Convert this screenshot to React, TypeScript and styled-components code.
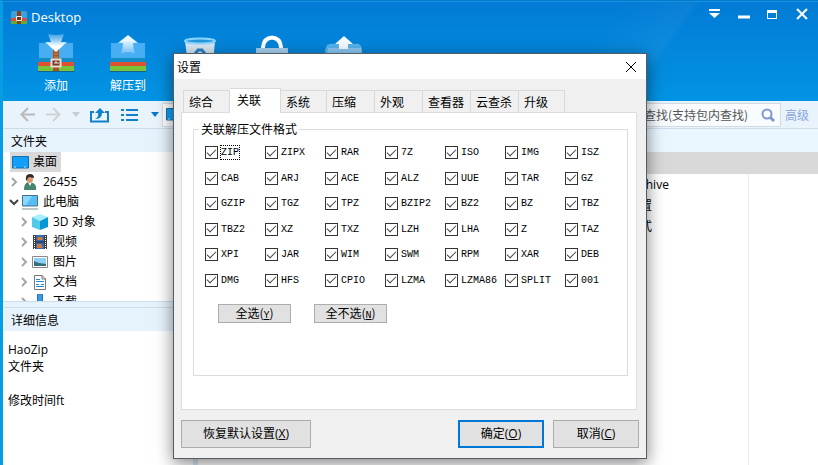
import React from "react";
import styled, { createGlobalStyle, css } from "styled-components";

const UI_FONT = `"Open Sans", "Noto Sans CJK SC", sans-serif`;
const CJK_FONT = `"Noto Sans CJK SC", sans-serif`;
const MONO_FONT = `"Liberation Mono", "Noto Sans CJK SC", monospace`;

const GlobalStyle = createGlobalStyle`
  *, *::before, *::after { box-sizing: border-box; }
  body { margin: 0; font: 12px/16px ${UI_FONT}; color: #000; overflow: hidden; }
  button, input { font: inherit; color: inherit; }
  button { padding: 0; margin: 0; border: 0; background: none; }
  svg { display: block; flex: none; }
`;

const Window = styled.div`
  position: relative;
  display: flex;
  flex-direction: column;
  height: 100vh;
  border-left: 3px solid #069de3;
  border-top: 1px solid #0878cb;
  background: #fff;
`;

const Banner = styled.header`
  flex: none;
  height: 100px;
  color: #fff;
  border-top: 1px solid #1192e2;
  background:
    linear-gradient(125deg, transparent 70%, rgba(255, 255, 255, 0.04) 78%, transparent 79%),
    linear-gradient(#027bd5, #0394e4);
`;

const TitleBar = styled.div`
  display: flex;
  align-items: center;
  justify-content: space-between;
  height: 30px;
  padding: 0 7px 0 8px;
`;

const AppTitle = styled.h1`
  display: flex;
  align-items: center;
  gap: 4px;
  margin: 0;
  font: 13px/18px ${UI_FONT};
`;

const WindowControls = styled.div`
  display: flex;
  gap: 11px;
  padding-bottom: 8px;
`;

const ActionBar = styled.div`
  display: flex;
  padding-left: 17px;
`;

const Action = styled.button`
  display: flex;
  flex-direction: column;
  align-items: center;
  justify-content: flex-start;
  width: 72px;
  font: 12px/20px ${CJK_FONT};
`;

const NavBar = styled.nav`
  flex: none;
  display: flex;
  align-items: center;
  height: 28px;
  padding-left: 12px;
  background: #e8f3fc;
  border-bottom: 1px solid #ccdcea;
`;

const NavButton = styled.button<{ $w: number }>`
  display: grid;
  place-items: center;
  width: ${(p) => p.$w}px;
  height: 24px;
`;

const AddressBox = styled.div`
  flex: 1;
  display: flex;
  align-items: center;
  height: 24px;
  margin-right: 4px;
  padding-left: 3px;
  border: 1px solid #d5dfe8;
  background: #fff;
`;

const SearchBox = styled.div`
  display: flex;
  align-items: center;
  width: 142px;
  height: 24px;
  border: 1px solid #d0dbe6;
  background: #f8fcff;
`;

const SearchInput = styled.input`
  flex: 1;
  min-width: 0;
  padding: 0 0 0 4px;
  border: 0;
  outline: 0;
  background: transparent;
  font: 12px/18px ${CJK_FONT};
  &::placeholder { color: #555; opacity: 1; }
`;

const AdvancedLink = styled.a`
  width: 37px;
  padding-left: 4px;
  color: #8ba4dc;
  font: 12px/18px ${CJK_FONT};
  text-decoration: none;
`;

const Workspace = styled.div`
  flex: 1;
  display: flex;
  min-height: 0;
`;

const Sidebar = styled.aside`
  flex: none;
  display: flex;
  flex-direction: column;
  width: 195px;
  border-right: 5px solid #dcebf7;
`;

const PaneTitle = styled.h2`
  flex: none;
  margin: 0;
  padding-left: 8px;
  height: 23px;
  font: 12px/23px ${CJK_FONT};
  background: #e6f2fc;
`;

const Tree = styled.ul`
  flex: none;
  height: 150px;
  margin: 0;
  padding: 0;
  overflow: hidden;
  list-style: none;
  border-bottom: 1px solid #c9deee;
`;

const TreeRow = styled.li<{ $level: number }>`
  display: flex;
  align-items: center;
  height: 20px;
  padding-left: ${(p) => 4 + p.$level * 10}px;
`;

const TreeItem = styled.span<{ $selected?: boolean }>`
  display: flex;
  align-items: center;
  gap: 4px;
  height: 20px;
  font: 12px/18px ${UI_FONT};
  ${(p) =>
    p.$selected &&
    css`
      margin-left: 3px;
      padding: 0 4px 0 2px;
      background: #d9d9d9;
    `}
`;

const Arrow = styled.span`
  display: grid;
  place-items: center;
  width: 14px;
`;

const Details = styled.section`
  flex: 1;
  margin-top: 5px;
  border-top: 1px solid #c9deee;
  box-shadow: 0 -5px 0 #e6f2fc;
`;

const DetailText = styled.p`
  margin: 0;
  padding: 10px 5px 0;
  font: 12px/17px ${UI_FONT};
`;

const FileList = styled.main`
  flex: 1;
  display: flex;
  flex-direction: column;
  min-width: 0;
  background: #fff;
`;

const ListHeader = styled.div`
  height: 23px;
  background: #ebf7ff;
`;

const ListBody = styled.div`
  flex: 1;
  display: flex;
`;

const NameColumn = styled.div`
  flex: none;
  width: 551px;
  border-right: 1px solid #e1f0fa;
`;

const SelectedRow = styled.div`
  height: 22px;
  background: #d9d9d9;
`;

const FileRow = styled.div`
  height: 21px;
  padding-left: 442px;
  font: 12px/21px ${UI_FONT};
`;

const Overlay = styled.div`
  position: absolute;
  inset: 0;
  display: flex;
  align-items: flex-start;
  justify-content: center;
  padding-top: 52px;
  padding-right: 1px;
`;

const Dialog = styled.section`
  width: 474px;
  border: 1px solid #535d64;
  background: #f0f0f0;
  box-shadow: 0 4px 16px rgba(0, 0, 0, 0.5);
`;

const DialogTitle = styled.header`
  display: flex;
  align-items: center;
  justify-content: space-between;
  height: 25px;
  padding: 0 9px 0 3px;
  font: 12px/22px ${CJK_FONT};
  background: #fff;
`;

const DialogBody = styled.div`
  padding: 9px 7px 10px;
`;

const Tabs = styled.div`
  display: flex;
  align-items: flex-end;
  padding-left: 2px;
`;

const Tab = styled.button<{ $w: number; $active?: boolean }>`
  width: ${(p) => p.$w}px;
  height: 22px;
  padding-left: 5px;
  text-align: left;
  font: 12px/20px ${CJK_FONT};
  border: 1px solid #d9d9d9;
  border-width: 1px 1px 0 0;
  &:first-child { border-left-width: 1px; }
  ${(p) =>
    p.$active &&
    css`
      height: 25px;
      margin-bottom: -1px;
      padding: 0 0 2px 7px;
      background: #fff;
    `}
`;

const TabPanel = styled.div`
  margin-right: 2px;
  padding: 7px 8px 33px 11px;
  border: 1px solid #dcdcdc;
  background: #fff;
`;

const Group = styled.fieldset`
  min-width: 0;
  margin: 0;
  padding: 2px 2px 52px 11px;
  border: 1px solid #dcdcdc;
`;

const GroupTitle = styled.legend`
  margin-left: -6px;
  padding: 0 2px;
  font: 12px/18px ${CJK_FONT};
`;

const FormatGrid = styled.div`
  display: grid;
  grid-template-columns: repeat(7, 60px);
  grid-template-rows: repeat(6, 1fr);
  height: 153px;
`;

const Format = styled.label`
  display: flex;
  align-items: center;
  gap: 2px;
  font: 10px/13px ${MONO_FONT};
`;

const Check = styled.input`
  appearance: none;
  flex: none;
  width: 13px;
  height: 13px;
  margin: 0;
  border: 1px solid #333;
  background: #fff;
  display: grid;
  place-items: center;
  &:checked::after {
    content: "";
    width: 9px;
    height: 5px;
    margin-bottom: 3px;
    border: solid #444;
    border-width: 0 0 1px 1px;
    transform: rotate(-45deg);
  }
`;

const FormatName = styled.span<{ $focused?: boolean }>`
  border: 1px ${(p) => (p.$focused ? "dotted #000" : "solid transparent")};
`;

const SelectButtons = styled.div`
  display: flex;
  gap: 23px;
  padding: 11px 0 0 13px;
`;

const SmallButton = styled.button`
  width: 73px;
  height: 19px;
  border: 1px solid #adadad;
  background: #e1e1e1;
  font: 12px/16px ${CJK_FONT};
  u { font: 10px/16px ${MONO_FONT}; }
`;

const Footer = styled.footer`
  display: flex;
  gap: 9px;
  padding-top: 10px;
`;

const PushButton = styled.button<{ $primary?: boolean }>`
  width: 86px;
  height: 28px;
  border: ${(p) => (p.$primary ? "2px solid #0078d7" : "1px solid #adadad")};
  background: #e1e1e1;
  font: 12px/16px ${UI_FONT};
`;

const ResetButton = styled(PushButton)`
  width: 130px;
  margin-right: auto;
`;

const formats = [
  "ZIP", "ZIPX", "RAR", "7Z", "ISO", "IMG", "ISZ",
  "CAB", "ARJ", "ACE", "ALZ", "UUE", "TAR", "GZ",
  "GZIP", "TGZ", "TPZ", "BZIP2", "BZ2", "BZ", "TBZ",
  "TBZ2", "XZ", "TXZ", "LZH", "LHA", "Z", "TAZ",
  "XPI", "JAR", "WIM", "SWM", "RPM", "XAR", "DEB",
  "DMG", "HFS", "CPIO", "LZMA", "LZMA86", "SPLIT", "001",
];

const tabs: [string, number][] = [
  ["综合", 47], ["关联", 51], ["系统", 46], ["压缩", 48],
  ["外观", 48], ["查看器", 48], ["云查杀", 48], ["升级", 46],
];

const Archive = () => (
  <>
    <path d="M2 11H36V26H2Z" fill="#48aef3" />
    <path d="M1 26H37V30H1Z" fill="#128dc6" />
    <path d="M1 30H37V34H1Z" fill="#df5130" />
    <path d="M1 34H37V39H1Z" fill="#77c43b" />
    <path d="M1 39H37V40H1Z" fill="#16638e" />
  </>
);

const Buckle = () => (
  <>
    <path d="M16 17H22V39H16Z" fill="#a65222" />
    <path d="M17 19H21M17 22H21M17 25H21" stroke="#d78a3c" />
    <path d="M14.5 27.5H23.5V34.5H14.5Z" fill="#7b321c" stroke="#e5dfda" strokeWidth="2" />
    <path d="M17 31H19V29M19 31H22" stroke="#eee" fill="none" />
  </>
);

const AddIcon = () => (
  <svg width="38" height="43" viewBox="0 0 38 43">
    <defs>
      <linearGradient id="down" x2="0" y2="1">
        <stop stopColor="#bfe4ff" stopOpacity="0.35" />
        <stop offset="0.7" stopColor="#fff" />
      </linearGradient>
    </defs>
    <Archive />
    <Buckle />
    <path d="M11 2Q19 4 27 2L24 10H30L19 20L8 10H14Z" fill="url(#down)" />
  </svg>
);

const ExtractIcon = () => (
  <svg width="38" height="43" viewBox="0 0 38 43">
    <defs>
      <linearGradient id="up" x2="0" y2="1">
        <stop offset="0.3" stopColor="#eef9ff" />
        <stop offset="1" stopColor="#bce2ff" stopOpacity="0.4" />
      </linearGradient>
    </defs>
    <Archive />
    <path d="M19 3L29 11H24Q24 17 26 21L19 20L12 21Q14 17 14 11H9Z" fill="url(#up)" />
  </svg>
);

const TrashIcon = () => (
  <svg width="38" height="43" viewBox="0 0 38 43">
    <path d="M4 9H34L31 41H8Z" fill="#d9e9f5" />
    <ellipse cx="19" cy="9" rx="15" ry="2.500" fill="#2699df" stroke="#8bd6ff" strokeWidth="2" />
    <path d="M14 22L17 18H21L24 22" fill="none" stroke="#2d86cd" strokeWidth="3" />
  </svg>
);

const LockIcon = () => (
  <svg width="38" height="43" viewBox="0 0 38 43">
    <path d="M10 18V15Q11 6 19 5.500Q27 6 28 15V18" fill="none" stroke="#fff" strokeWidth="4" />
    <rect x="3" y="16" width="32" height="24" rx="1" fill="#a8d2f3" />
  </svg>
);

const SfxIcon = () => (
  <svg width="42" height="43" viewBox="0 0 42 43">
    <path d="M4 13Q8 11 12 12H32Q38 11 39 17L40 40H2V18Z" fill="#55b5ee" />
    <path d="M5 16H38L41 40H1Z" fill="#8acbf5" />
    <path d="M21 4L30 12H25V17H16V12H12Z" fill="#f5fbff" />
  </svg>
);

const ScreenIcon = () => (
  <svg width="17" height="13" viewBox="0 0 17 13">
    <path d="M.5.5H16.500V12H.5Z" fill="#129efb" stroke="#126fab" />
    <path d="M2 11H15" stroke="#b9e6ff" strokeDasharray="2 8" />
  </svg>
);

const UserIcon = () => (
  <svg width="18" height="18" viewBox="0 0 18 18">
    <path d="M3 17Q3 10 7 9L12 10Q16 12 15 17Z" fill="#46856e" />
    <path d="M7 9L9 13L11 9" fill="#fff" />
    <ellipse cx="9" cy="6" rx="3" ry="4" fill="#d99c70" />
    <path d="M5 7Q4 1 9 1Q13 1 13 5L8 4Q6 5 6 8Z" fill="#352a24" />
  </svg>
);

const ComputerIcon = () => (
  <svg width="18" height="17" viewBox="0 0 18 17">
    <path d="M1.500 1.500H16.500V12H1.500Z" fill="#56bdf5" stroke="#45718f" />
    <path d="M2 2H11L5 11H2Z" fill="#8ad8ff" />
    <path d="M1 15H17" stroke="#7d8b93" />
  </svg>
);

const CubeIcon = () => (
  <svg width="18" height="18" viewBox="0 0 18 18">
    <path d="M1 4L9 1L17 4L9 8Z" fill="#a8eefa" />
    <path d="M1 4L9 8V17L1 14Z" fill="#52c9e8" />
    <path d="M17 4L9 8V17L17 14Z" fill="#0797d4" />
  </svg>
);

const VideoIcon = () => (
  <svg width="18" height="16" viewBox="0 0 18 16">
    <path d="M2 1H16V15H2Z" fill="#3b3b3b" />
    <path d="M5 1H13V15H5Z" fill="#366bb0" />
    <path d="M7 3H11L12 6H6ZM6 10H10L12 14H6Z" fill="#ce7940" />
    <path d="M3.500 2V15M14.500 2V15" stroke="#fff" strokeDasharray="1 1" />
    <path d="M5 8H13" stroke="#222" />
  </svg>
);

const PictureIcon = () => (
  <svg width="18" height="14" viewBox="0 0 18 14">
    <path d="M1.500 1.500H16.500V12.500H1.500Z" fill="#fff" stroke="#888" />
    <path d="M3 3H15V11H3Z" fill="#8dd1f4" />
    <path d="M3 6L8 8L15 9V11H3Z" fill="#346f7b" />
  </svg>
);

const DocIcon = () => (
  <svg width="18" height="17" viewBox="0 0 18 17">
    <path d="M3.500 1.500H11L14.500 5V15.500H3.500Z" fill="#fff" stroke="#777" />
    <path d="M11 1V5H15" fill="none" stroke="#777" />
    <path d="M5 5.500H9M5 7.500H13M5 10.500H8M10 10.500H13M5 12.500H13" stroke="#238ac9" />
  </svg>
);

const DownloadIcon = () => (
  <svg width="18" height="17" viewBox="0 0 18 17">
    <path d="M6.500 0H11.500V10H14L9 16L4 10H6.500Z" fill="#3d9be5" stroke="#2473b9" />
  </svg>
);

const Chevron = ({ open }: { open?: boolean }) => (
  <svg width="10" height="10" viewBox="0 0 10 10" fill="none" strokeWidth="2">
    {open ? <path d="M1 3L5 7L9 3" stroke="#444" /> : <path d="M3 1L7 5L3 9" stroke="#a6a6a6" />}
  </svg>
);

const BackIcon = ({ color, flip }: { color: string; flip?: boolean }) => (
  <svg width="16" height="15" viewBox="0 0 16 15" fill="none" stroke={color} strokeWidth="2">
    {flip ? <path d="M1 7.500H14M8 1L14.500 7.500L8 14" /> : <path d="M15 7.500H2M8 1L1.500 7.500L8 14" />}
  </svg>
);

const Caret = ({ color }: { color: string }) => (
  <svg width="8" height="5" viewBox="0 0 8 5">
    <path d="M0 0H8L4 5Z" fill={color} />
  </svg>
);

const windowControls: { label: string; shape: React.ReactNode }[] = [
  { label: "菜单", shape: <path d="M3 4H14V6H3ZM3 8H14L8.500 13Z" fill="#fff" /> },
  { label: "最小化", shape: <path d="M3 12H15" stroke="#fff" strokeWidth="3" /> },
  { label: "最大化", shape: <path d="M3 5H13V14H3ZM4 8V13H12V8Z" fill="#fff" fillRule="evenodd" /> },
  { label: "关闭", shape: <path d="M4 4L14 14M14 4L4 14" stroke="#fff" strokeWidth="2" /> },
];

const places: { name: string; level: number; icon: React.ReactNode; open?: boolean }[] = [
  { name: "26455", level: 0, icon: <UserIcon /> },
  { name: "此电脑", level: 0, icon: <ComputerIcon />, open: true },
  { name: "3D 对象", level: 1, icon: <CubeIcon /> },
  { name: "视频", level: 1, icon: <VideoIcon /> },
  { name: "图片", level: 1, icon: <PictureIcon /> },
  { name: "文档", level: 1, icon: <DocIcon /> },
  { name: "下载", level: 1, icon: <DownloadIcon /> },
];

function Explorer() {
  return (
    <>
      <Banner>
        <TitleBar>
          <AppTitle>
            <svg width="16" height="15" viewBox="0 0 16 15">
              <rect width="16" height="13" y="1" rx="2" fill="#3f9fd6" />
              <path d="M0 8H16V11H0Z" fill="#df5130" />
              <path d="M0 11H16V14H0Z" fill="#65aa35" />
              <path d="M6 1H10V14H6Z" fill="#87401f" />
              <path d="M5.500 6.500H10.500V10.500H5.500Z" fill="#7b321c" stroke="#eee" />
            </svg>
            Desktop
          </AppTitle>
          <WindowControls>
            {windowControls.map(({ label, shape }) => (
              <button key={label} aria-label={label}>
                <svg width="18" height="16" viewBox="0 0 18 16">{shape}</svg>
              </button>
            ))}
          </WindowControls>
        </TitleBar>
        <ActionBar>
          <Action><AddIcon />添加</Action>
          <Action><ExtractIcon />解压到</Action>
          <Action aria-label="删除"><TrashIcon /></Action>
          <Action aria-label="密码"><LockIcon /></Action>
          <Action aria-label="自解压"><SfxIcon /></Action>
        </ActionBar>
      </Banner>
      <NavBar>
        <NavButton $w={26} aria-label="后退"><BackIcon color="#bababa" /></NavButton>
        <NavButton $w={24} aria-label="前进"><BackIcon color="#d0d3d6" flip /></NavButton>
        <NavButton $w={22} aria-label="历史"><Caret color="#c5cbd0" /></NavButton>
        <NavButton $w={24} aria-label="向上">
          <svg width="19" height="16" viewBox="0 0 19 16">
            <path d="M4 5H1V14.500H18V5H15" fill="none" stroke="#1180cc" strokeWidth="2" />
            <path d="M5 12Q9 10 8 6H5L10 1L15 6H12Q12 12 5 12Z" fill="#1180cc" />
          </svg>
        </NavButton>
        <NavButton $w={36} aria-label="视图">
          <svg width="17" height="12" viewBox="0 0 17 12">
            <path d="M0 1H3M5 1H17M0 6H3M5 6H17M0 11H3M5 11H17" stroke="#1180cc" strokeWidth="2" />
          </svg>
        </NavButton>
        <NavButton $w={15} aria-label="视图选项"><Caret color="#0878c8" /></NavButton>
        <AddressBox><ScreenIcon /></AddressBox>
        <SearchBox>
          <SearchInput aria-label="查找" placeholder="查找(支持包内查找)" />
          <NavButton $w={24} aria-label="开始查找">
            <svg width="14" height="14" viewBox="0 0 14 14" fill="none" stroke="#8297d0">
              <circle cx="6" cy="6" r="4.500" strokeWidth="2" />
              <path d="M9 9L13 13" strokeWidth="3" />
            </svg>
          </NavButton>
        </SearchBox>
        <AdvancedLink href="#advanced">高级</AdvancedLink>
      </NavBar>
      <Workspace>
        <Sidebar>
          <PaneTitle>文件夹</PaneTitle>
          <Tree>
            <TreeRow $level={0}>
              <TreeItem $selected><ScreenIcon />桌面</TreeItem>
            </TreeRow>
            {places.map((p) => (
              <TreeRow key={p.name} $level={p.level}>
                <Arrow><Chevron open={p.open} /></Arrow>
                <TreeItem>{p.icon}{p.name}</TreeItem>
              </TreeRow>
            ))}
          </Tree>
          <Details>
            <PaneTitle>详细信息</PaneTitle>
            <DetailText>HaoZip<br />文件夹<br /><br />修改时间ft</DetailText>
          </Details>
        </Sidebar>
        <FileList>
          <ListHeader />
          <SelectedRow />
          <ListBody>
            <NameColumn>
              <FileRow>chive</FileRow>
              <FileRow>置</FileRow>
              <FileRow>式</FileRow>
            </NameColumn>
          </ListBody>
        </FileList>
      </Workspace>
    </>
  );
}

export default function App() {
  return (
    <Window>
      <GlobalStyle />
      <Explorer />
      <Overlay>
        <Dialog role="dialog" aria-label="设置">
          <DialogTitle>
            设置
            <button aria-label="关闭设置">
              <svg width="12" height="12" viewBox="0 0 12 12">
                <path d="M1 1L11 11M11 1L1 11" stroke="#000" />
              </svg>
            </button>
          </DialogTitle>
          <DialogBody>
            <Tabs role="tablist">
              {tabs.map(([name, w]) => (
                <Tab key={name} role="tab" aria-selected={name === "关联"} $w={w} $active={name === "关联"}>
                  {name}
                </Tab>
              ))}
            </Tabs>
            <TabPanel role="tabpanel">
              <Group>
                <GroupTitle>关联解压文件格式</GroupTitle>
                <FormatGrid>
                  {formats.map((f) => (
                    <Format key={f}>
                      <Check type="checkbox" defaultChecked />
                      <FormatName $focused={f === "ZIP"}>{f}</FormatName>
                    </Format>
                  ))}
                </FormatGrid>
                <SelectButtons>
                  <SmallButton>全选(<u>Y</u>)</SmallButton>
                  <SmallButton>全不选(<u>N</u>)</SmallButton>
                </SelectButtons>
              </Group>
            </TabPanel>
            <Footer>
              <ResetButton>恢复默认设置(<u>X</u>)</ResetButton>
              <PushButton $primary>确定(<u>O</u>)</PushButton>
              <PushButton>取消(<u>C</u>)</PushButton>
            </Footer>
          </DialogBody>
        </Dialog>
      </Overlay>
    </Window>
  );
}
